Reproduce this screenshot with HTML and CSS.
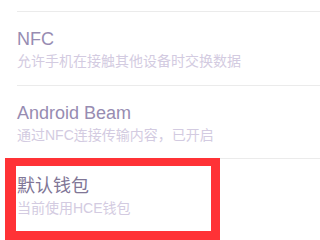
FILE: index.html
```html
<!DOCTYPE html>
<html lang="zh">
<head>
<meta charset="utf-8">
<link rel="stylesheet" href="styles.css">
</head>
<body>
<div class="screen">
  <div class="prev-row"></div>
  <div class="row">
    <div class="title">NFC</div>
    <div class="sub">允许手机在接触其他设备时交换数据</div>
  </div>
  <div class="row">
    <div class="title">Android Beam</div>
    <div class="sub">通过NFC连接传输内容，已开启</div>
  </div>
  <div class="row">
    <div class="title title-dark">默认钱包</div>
    <div class="sub">当前使用HCE钱包</div>
  </div>
  <div class="highlight"></div>
</div>
</body>
</html>
```

FILE: styles.css
```css
html, body {
  margin: 0;
  padding: 0;
  background: #ffffff;
}

.screen {
  position: relative;
  width: 320px;
  height: 240px;
  overflow: hidden;
  background: #ffffff;
  font-family: "Liberation Sans", "Noto Sans CJK SC", sans-serif;
}

.prev-row {
  height: 11px;
}

.row {
  margin-left: 17px;
  border-top: 1px solid #ebebeb;
  padding-top: 16px;
  box-sizing: border-box;
  height: 73.5px;
}

.title {
  font-size: 18px;
  line-height: 22px;
  color: #978cb2;
  white-space: nowrap;
}

.title-dark {
  color: #807696;
}

.sub {
  margin-top: 2px;
  font-size: 14px;
  line-height: 18px;
  color: #d3cbe1;
  white-space: nowrap;
}

.highlight {
  position: absolute;
  left: 5px;
  top: 158px;
  width: 215px;
  height: 82px;
  box-sizing: border-box;
  border-style: solid;
  border-color: #ff3236;
  border-width: 8px 9px 9px 11px;
}
```
